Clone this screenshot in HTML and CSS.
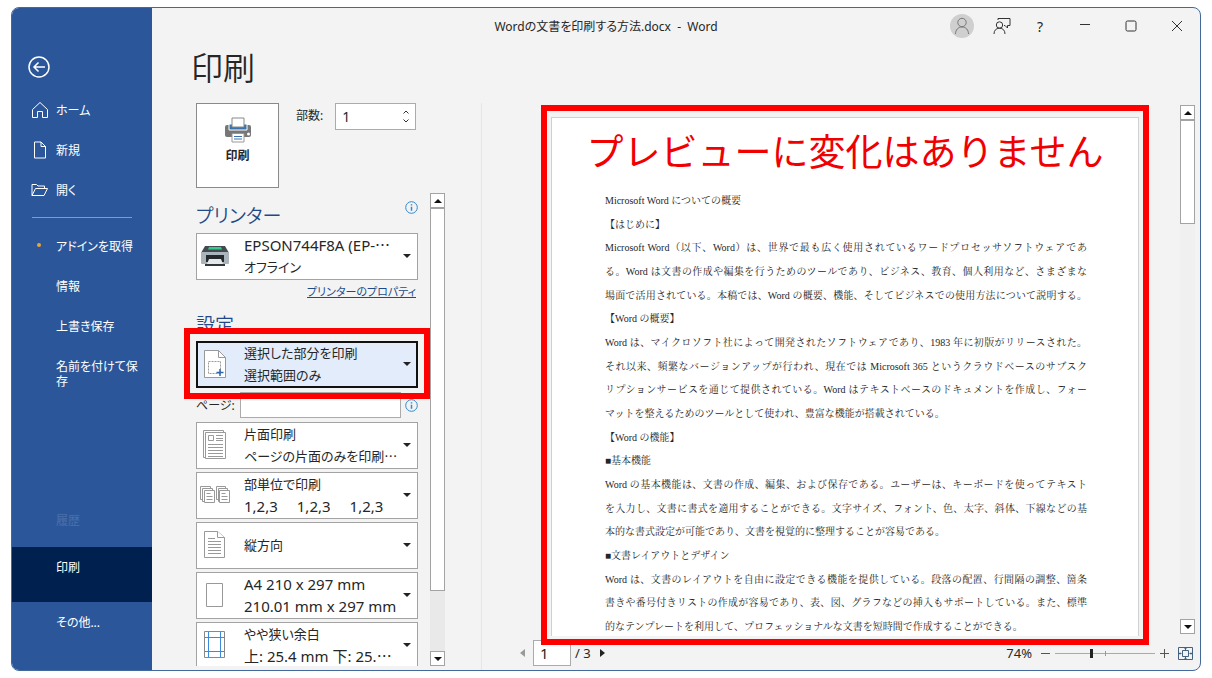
FILE: index.html
```html
<!DOCTYPE html>
<html lang="ja">
<head>
<meta charset="utf-8">
<title>Wordの文書を印刷する方法.docx - Word</title>
<link rel="stylesheet" href="styles.css">
</head>
<body>
<div class="window">
  <nav class="sidebar" aria-label="ファイル">
    <button class="back" aria-label="戻る">
      <svg width="22" height="22" viewBox="0 0 22 22"><circle cx="11" cy="11" r="10" stroke-width="1.5"/><path d="M17 11H6M10.500 6.500L6 11l4.500 4.500" stroke-width="1.500"/></svg>
    </button>
    <a class="item" href="#"><svg class="nav-icon" width="18" height="18" viewBox="0 0 18 18"><path d="M1.500 8.500L9 1.500l7.500 7V16.500h-5v-6h-5v6h-5z"/></svg>ホーム</a>
    <a class="item" href="#"><svg class="nav-icon" width="18" height="18" viewBox="0 0 18 18"><path d="M3.500 1h6.500l4.500 4.500V17h-11zM10 1v4.500h4.500"/></svg>新規</a>
    <a class="item" href="#"><svg class="nav-icon" width="18" height="18" viewBox="0 0 18 18"><path d="M1 14.500v-11h4.500L7 5h6.500v2.500M1 14.500L4.500 7.500h12L13 14.500z"/></svg>開く</a>
    <hr class="rule">
    <a class="item" href="#"><span class="dot"></span>アドインを取得</a>
    <a class="item" href="#">情報</a>
    <a class="item" href="#">上書き保存</a>
    <a class="item" href="#">名前を付けて保存</a>
    <a class="item history" aria-disabled="true">履歴</a>
    <a class="item current" href="#" aria-current="page">印刷</a>
    <a class="item more" href="#">その他...</a>
  </nav>

  <header class="titlebar">
    <div class="title">Wordの文書を印刷する方法.docx&nbsp; -&nbsp; Word</div>
    <div class="title-actions">
      <button class="avatar" aria-label="アカウント"><svg width="16" height="18" viewBox="0 0 16 18"><circle cx="8" cy="5.500" r="4.200"/><path d="M1.500 17c0-4 2.500-7 6.500-7s6.500 3 6.500 7"/></svg></button>
      <button class="plain feedback" aria-label="フィードバック"><svg width="18" height="18" viewBox="0 0 18 18"><circle cx="6.500" cy="8" r="3.200"/><path d="M1 17c0-3.500 2-5.800 5.500-5.800S12 13.500 12 17M5 3V1.500h12v7h-2.500v2.500L12 8.500h-1"/></svg></button>
      <button class="plain help" aria-label="ヘルプ">?</button>
      <button class="plain" aria-label="最小化"><svg width="12" height="12" viewBox="0 0 12 12"><path d="M1 4.500h10"/></svg></button>
      <button class="plain" aria-label="最大化"><svg width="12" height="12" viewBox="0 0 12 12"><rect x="1" y="1" width="10" height="10" rx="1.500"/></svg></button>
      <button class="plain" aria-label="閉じる"><svg width="12" height="12" viewBox="0 0 12 12"><path d="M1 1l10 10M11 1L1 11"/></svg></button>
    </div>
  </header>

  <main class="main">
    <h1>印刷</h1>
    <div class="columns">
      <section class="settings">
        <div class="print-row">
          <button class="print">
            <svg width="28" height="26" viewBox="0 0 28 26"><rect x="1" y="8" width="26" height="12" rx="2" fill="#777"/><path d="M5 7h18v6H5z" fill="#3b72ad" stroke="#fff"/><path d="M8 1h12v9H8z" fill="#fff" stroke="#888"/><path d="M8 16.500h12v8.500H8z" fill="#fff" stroke="#999"/><path d="M10 19.500h8M10 22h8" stroke="#3b72ad"/><circle cx="24.500" cy="17" r="1.500" fill="#fff"/></svg>
            <span>印刷</span>
          </button>
          <label for="copies">部数:</label>
          <div class="spin">
            <input id="copies" type="number" value="1" min="1">
            <div class="spin-buttons">
              <button aria-label="増やす"><svg width="6" height="4" viewBox="0 0 6 4"><path d="M.5 3.500L3 1l2.500 2.500"/></svg></button>
              <button aria-label="減らす"><svg width="6" height="4" viewBox="0 0 6 4"><path d="M.5 .5L3 3 5.500 .5"/></svg></button>
            </div>
          </div>
        </div>

        <div class="scroll-area">
          <div class="options">
            <div class="heading-row"><h2>プリンター</h2><button class="info" aria-label="プリンターの情報"><svg width="13" height="13" viewBox="0 0 13 13"><circle cx="6.500" cy="6.500" r="5.800"/><path d="M6.500 5.700v4M6.500 3.200v1.400" stroke-width="1.500"/></svg></button></div>
            <button class="choice" aria-haspopup="listbox">
              <svg class="choice-icon" width="32" height="32" viewBox="0 0 32 32"><path d="M6 6h20l4 7H2z" fill="#434b50"/><path d="M10 7h12l1 2.500H9z" fill="#35c98c"/><rect x="2" y="12" width="28" height="12" rx="1" fill="#aab4bb"/><path d="M7 15h18v7H7z" fill="#24292c"/><path d="M10 19h12l2 5H8z" fill="#e4e8ea"/><path d="M6 24h20v2H6z" fill="#30363a"/></svg>
              <span class="lines"><span class="latin">EPSON744F8A (EP-⋯</span><span>オフライン</span></span><span class="arrow"></span>
            </button>
            <a class="properties" href="#">プリンターのプロパティ</a>
            <h2 class="setup">設定</h2>
            <button class="choice selected" aria-haspopup="listbox">
              <svg class="choice-icon" width="32" height="32" viewBox="0 0 32 32"><path d="M5.500 2.500h14l7 7v20h-21z" fill="#fff" stroke="#999"/><path d="M19.500 2.500v7h7" fill="none" stroke="#999"/><path d="M9.500 13.500h12v12h-12z" fill="none" stroke="#999" stroke-dasharray="2 1"/><path d="M21 21v7M17.500 24.500h7" stroke="#2b67ad" stroke-width="1.500"/></svg>
              <span class="lines"><span>選択した部分を印刷</span><span>選択範囲のみ</span></span><span class="arrow"></span>
            </button>
            <div class="pages"><label for="pages">ページ:</label><input id="pages" type="text"><button class="info" aria-label="ページ指定の情報"><svg width="13" height="13" viewBox="0 0 13 13"><circle cx="6.500" cy="6.500" r="5.800"/><path d="M6.500 5.700v4M6.500 3.200v1.400" stroke-width="1.500"/></svg></button></div>
            <button class="choice" aria-haspopup="listbox">
              <svg class="choice-icon" width="32" height="32" viewBox="0 0 32 32" fill="#fff" stroke="#999"><path d="M4.500 1.500h20v27h-20z"/><path d="M6.500 3.500h20v26h-20z"/><path d="M9.500 6.500h5v5h-5zM17 6.500h7M17 9.500h7M17 11.500h7M9 15.500h15M9 18.500h15M9 21.500h15M9 24.500h15M9 27.500h15"/></svg>
              <span class="lines"><span>片面印刷</span><span>ページの片面のみを印刷⋯</span></span><span class="arrow"></span>
            </button>
            <button class="choice" aria-haspopup="listbox">
              <svg class="choice-icon" width="32" height="32" viewBox="0 0 32 32" fill="#fff" stroke="#999"><path d="M1.500 7.500h10v13h-10z"/><path d="M3.500 9.500h10v13h-10z"/><path d="M5.500 11.500h10v12h-10z"/><path d="M17.500 7.500h9v13h-9z"/><path d="M19.500 9.500h9v13h-9z"/><path d="M20.500 11.500h10v12h-10z"/><path d="M7.500 14.500h4M7.500 17.500h6M7.500 20.500h6M22.500 14.500h4M22.500 17.500h6M22.500 20.500h6"/></svg>
              <span class="lines"><span>部単位で印刷</span><span class="collate latin"><span>1,2,3</span><span>1,2,3</span><span>1,2,3</span></span></span><span class="arrow"></span>
            </button>
            <button class="choice" aria-haspopup="listbox">
              <svg class="choice-icon" width="32" height="32" viewBox="0 0 32 32" fill="#fff" stroke="#999"><path d="M5.500 2.500h13l7 6v20h-20z"/><path d="M18.500 2.500v6h7M9 9.500h7M9 12.500h13M9 15.500h13M9 18.500h13M9 21.500h13M9 24.500h13"/></svg>
              <span class="lines"><span>縦方向</span></span><span class="arrow"></span>
            </button>
            <button class="choice" aria-haspopup="listbox">
              <svg class="choice-icon" width="32" height="32" viewBox="0 0 32 32" fill="#fff" stroke="#999"><path d="M7.500 4.500h16v23h-16z"/></svg>
              <span class="lines latin"><span>A4 210 x 297 mm</span><span>210.01 mm x 297 mm</span></span><span class="arrow"></span>
            </button>
            <button class="choice" aria-haspopup="listbox">
              <svg class="choice-icon" width="32" height="32" viewBox="0 0 32 32" fill="#fff" stroke="#888"><path d="M5.500 2.500h20v26h-20z"/><path d="M9.500 3v25M21.500 3v25M6 8.500h19M6 22.500h19" stroke="#3a8add"/></svg>
              <span class="lines"><span>やや狭い余白</span><span class="latin">上: 25.4 mm 下: 25.⋯</span></span><span class="arrow"></span>
            </button>
          </div>
          <div class="scrollbar options-scroll">
            <button class="step up" aria-label="上へ"></button><div class="thumb"></div><button class="step down" aria-label="下へ"></button>
          </div>
        </div>
      </section>

      <section class="preview">
        <div class="preview-body">
          <div class="stage">
            <article class="page">
              <p class="callout">プレビューに変化はありません</p>
              <div class="text">
                <p>Microsoft Word についての概要</p>
                <p>【はじめに】</p>
                <p class="full">Microsoft Word（以下、Word）は、世界で最も広く使用されているワードプロセッサソフトウェアであ</p>
                <p class="full">る。Word は文書の作成や編集を行うためのツールであり、ビジネス、教育、個人利用など、さまざまな</p>
                <p class="full">場面で活用されている。本稿では、Word の概要、機能、そしてビジネスでの使用方法について説明する。</p>
                <p>【Word の概要】</p>
                <p class="full">Word は、マイクロソフト社によって開発されたソフトウェアであり、1983 年に初版がリリースされた。</p>
                <p class="full">それ以来、頻繁なバージョンアップが行われ、現在では Microsoft 365 というクラウドベースのサブスク</p>
                <p class="full">リプションサービスを通じて提供されている。Word はテキストベースのドキュメントを作成し、フォー</p>
                <p>マットを整えるためのツールとして使われ、豊富な機能が搭載されている。</p>
                <p>【Word の機能】</p>
                <p>■基本機能</p>
                <p class="full">Word の基本機能は、文書の作成、編集、および保存である。ユーザーは、キーボードを使ってテキスト</p>
                <p class="full">を入力し、文書に書式を適用することができる。文字サイズ、フォント、色、太字、斜体、下線などの基</p>
                <p>本的な書式設定が可能であり、文書を視覚的に整理することが容易である。</p>
                <p>■文書レイアウトとデザイン</p>
                <p class="full">Word は、文書のレイアウトを自由に設定できる機能を提供している。段落の配置、行間隔の調整、箇条</p>
                <p class="full">書きや番号付きリストの作成が容易であり、表、図、グラフなどの挿入もサポートしている。また、標準</p>
                <p>的なテンプレートを利用して、プロフェッショナルな文書を短時間で作成することができる。</p>
              </div>
            </article>
          </div>
          <div class="scrollbar">
            <button class="step up" aria-label="上へ"></button><div class="thumb short"></div><button class="step down" aria-label="下へ"></button>
          </div>
        </div>
        <footer class="status">
          <button class="turn prev" aria-label="前のページ"></button>
          <input class="page-number" type="text" value="1" aria-label="ページ番号">
          <span>/ 3</span>
          <button class="turn next" aria-label="次のページ"></button>
          <div class="zoom">
            <output for="zoom">74%</output>
            <button aria-label="縮小"><svg width="9" height="9" viewBox="0 0 9 9"><path d="M0 4.500h9"/></svg></button>
            <input id="zoom" type="range" min="0" max="100" value="36" aria-label="ズーム">
            <button aria-label="拡大"><svg width="9" height="9" viewBox="0 0 9 9"><path d="M0 4.500h9M4.500 0v9"/></svg></button>
            <button class="fit" aria-label="ページに合わせる"><svg width="15" height="13" viewBox="0 0 15 13"><path d="M.5 .5h14v12H.5z"/><path d="M4.500 3.500h6v6h-6zM7.500 1v2M7.500 10v2M1 6.500h2.500M11.500 6.500H14M6.500 2l1-1 1 1M6.500 11l1 1 1-1M2 5.500l-1 1 1 1M13 5.500l1 1-1 1"/></svg></button>
          </div>
        </footer>
      </section>
    </div>
  </main>
</div>
</body>
</html>
```
FILE: styles.css
```css
* { box-sizing: border-box; }

body {
  margin: 0;
  height: 100vh;
  padding: 7px 11px;
  background: #fff;
  color: #262626;
  font-family: "Noto Sans", "Noto Sans CJK JP", sans-serif;
  font-size: 12px;
  font-feature-settings: "palt";
}

h1, h2, p { margin: 0; font-weight: 400; }

button, input {
  margin: 0;
  padding: 0;
  border: 0;
  background: none;
  color: inherit;
  font: inherit;
  font-feature-settings: inherit;
}

svg { display: block; flex: none; }

.window {
  display: grid;
  grid-template-columns: 140px minmax(0, 1fr);
  grid-template-rows: 36px minmax(0, 1fr);
  height: 100%;
  overflow: hidden;
  border: 1px solid #42699b;
  border-radius: 8px;
  background: #f3f3f3;
}

/* sidebar */
.sidebar {
  grid-column: 1;
  grid-row: 1 / 3;
  display: flex;
  flex-direction: column;
  background: #2b579a;
  color: #fff;
}

.back {
  margin: 48px 0 12px 16px;
  width: 22px;
  height: 22px;
}

.back svg, .nav-icon { fill: none; stroke: #fff; }

.item {
  position: relative;
  flex: none;
  min-height: 40px;
  padding: 13px 8px 12px 44px;
  line-height: 15px;
  color: #fff;
  text-decoration: none;
}

.nav-icon {
  position: absolute;
  left: 19px;
  top: 11px;
}

.dot {
  position: absolute;
  left: 25px;
  top: 17px;
  width: 4px;
  height: 4px;
  border-radius: 50%;
  background: #e8a33d;
}

.rule {
  width: 100px;
  height: 1px;
  margin: 7px 20px 8px;
  border: 0;
  background: #7f9cc8;
}

.history { margin-top: auto; height: 47px; color: #4a70ac; }
.current { height: 55px; background: #00204f; }
.more { height: 68px; }

/* title bar */
.titlebar {
  grid-column: 1 / 3;
  grid-row: 1;
  z-index: 1;
  display: grid;
  grid-template-columns: 1fr auto 1fr;
  align-items: center;
}

.title { grid-column: 2; }

.title-actions {
  justify-self: end;
  display: flex;
  align-items: center;
}

.title-actions svg { fill: none; stroke: #333; }

.avatar {
  display: grid;
  place-items: center;
  width: 24px;
  height: 24px;
  margin-right: 8px;
  border-radius: 50%;
  background: #cfcfcf;
}

.title-actions .avatar svg { stroke: #777; }

.plain {
  display: grid;
  place-items: center;
  width: 46px;
  height: 32px;
}

.feedback { width: 40px; }
.help { width: 36px; margin-right: 4px; font-size: 14px; }

/* main */
.main {
  grid-column: 2;
  grid-row: 2;
  display: flex;
  flex-direction: column;
  min-height: 0;
}

h1 {
  padding: 0 0 15px 39px;
  font-family: "Noto Sans CJK JP", sans-serif;
  font-size: 32px;
  font-weight: 350;
  line-height: 44px;
}

.columns { flex: 1; display: flex; min-height: 0; }

.settings {
  width: 330px;
  display: flex;
  flex-direction: column;
  padding: 0 36px 4px 44px;
  border-right: 1px solid #e6e6e6;
}

.print-row {
  display: flex;
  align-items: flex-start;
  margin-bottom: 5px;
}

.print {
  display: flex;
  flex-direction: column;
  align-items: center;
  gap: 4px;
  width: 83px;
  height: 85px;
  padding-top: 13px;
  border: 1px solid #8a8a8a;
  background: #fff;
  font-weight: 700;
  line-height: 18px;
}

.print-row label { margin: 4px 12px 0 17px; line-height: 18px; }

.spin {
  display: flex;
  width: 81px;
  height: 27px;
  border: 1px solid #ababab;
  background: #fff;
}

.spin input {
  flex: 1;
  min-width: 0;
  padding-left: 6px;
  font-size: 14px;
  appearance: textfield;
}

.spin input::-webkit-inner-spin-button { appearance: none; }

.spin-buttons {
  display: flex;
  flex-direction: column;
  justify-content: space-evenly;
  padding-right: 6px;
}

.spin-buttons svg { fill: none; stroke: #333; }

.scroll-area {
  flex: 1;
  min-height: 0;
  display: flex;
  justify-content: space-between;
}

.options {
  width: 222px;
  display: flex;
  flex-direction: column;
  gap: 3px;
  clip-path: inset(0 -20px);
}

h2 {
  font-family: "Noto Sans CJK JP", sans-serif;
  font-size: 19px;
  font-weight: 350;
  line-height: 28px;
  color: #1f4a87;
}

.heading-row {
  display: flex;
  flex: none;
  justify-content: space-between;
  height: 37px;
  padding-top: 8px;
}

.info { width: 13px; height: 13px; }
.info svg { fill: none; stroke: #3489c9; }

.choice {
  flex: none;
  display: flex;
  align-items: center;
  height: 47px;
  padding: 0 6px 2px 2px;
  border: 1px solid #a3a3a3;
  background: #fff;
  text-align: left;
  font-size: 13px;
}

.choice-icon { margin-right: 13px; }

.lines {
  flex: 1;
  display: flex;
  flex-direction: column;
  line-height: 22px;
  white-space: nowrap;
  min-width: 0;
}

.latin { font-size: 15px; }
.collate { display: flex; gap: 19px; }

.arrow {
  border: 4px solid transparent;
  border-top-color: #222;
  border-bottom: 0;
}

.properties {
  align-self: flex-end;
  padding-right: 2px;
  font-size: 11px;
  line-height: 18px;
  color: #1f4a87;
}

.setup { flex: none; height: 34px; padding-top: 6px; }

.selected {
  position: relative;
  padding: 0 5px 1px 1px;
  border: 2px solid #111;
  background: #e3ecfa;
}

.selected::after {
  content: "";
  position: absolute;
  z-index: 1;
  inset: -15px -14px -13px;
  border: 6px solid #f00;
}

.pages {
  flex: none;
  display: flex;
  align-items: center;
  height: 28px;
}

.pages label { flex: none; width: 44px; white-space: nowrap; }

.pages input {
  flex: 1;
  min-width: 0;
  height: 26px;
  margin-right: 4px;
  border: 1px solid #ababab;
  background: #fff;
}

/* scroll bars */
.scrollbar {
  flex: none;
  width: 15px;
  display: flex;
  flex-direction: column;
  background: #e9e9e9;
}

.step {
  display: grid;
  place-items: center;
  width: 15px;
  height: 15px;
  border: 1px solid #a3a3a3;
  background: #fff;
}

.step::before { content: ""; border: 4px solid transparent; }
.up::before { border-bottom-color: #111; border-top: 0; }
.down::before { border-top-color: #111; border-bottom: 0; }
.down { margin-top: auto; }

.thumb { height: 81%; border: 1px solid #a3a3a3; background: #fff; }
.short { height: 104px; }

/* preview */
.preview {
  flex: 1;
  min-width: 0;
  display: flex;
  flex-direction: column;
  padding: 2px 5px 0 0;
}

.preview-body { flex: 1; min-height: 0; display: flex; }
.preview-body .scrollbar { margin-bottom: 2px; background: #f0f0f0; }

.stage {
  position: relative;
  flex: 1;
  min-width: 0;
  min-height: 0;
  margin: 0 31px 0 59px;
  padding: 12px 10px 0;
}

.stage::after {
  content: "";
  position: absolute;
  inset: 0 0 -9px;
  border: 6px solid #f00;
  pointer-events: none;
}

.page {
  height: 100%;
  display: flex;
  flex-direction: column;
  border: 1px solid #d0d0d0;
  border-bottom: 0;
  background: #fff;
}

.callout {
  flex: none;
  height: 73px;
  padding-top: 8px;
  text-align: center;
  white-space: nowrap;
  font-family: "Noto Sans CJK JP", sans-serif;
  font-feature-settings: normal;
  font-size: 37px;
  font-weight: 400;
  line-height: 48px;
  color: #f00000;
}

.text {
  flex: 1;
  display: flex;
  flex-direction: column;
  justify-content: space-between;
  padding: 0 51px 0 53px;
  margin-bottom: -1px;
  font-family: "Liberation Serif", "Noto Serif CJK JP", "Noto Sans CJK JP", serif;
  font-feature-settings: normal;
  font-size: 10px;
  font-weight: 300;
  line-height: 20px;
  white-space: nowrap;
}

.full { text-align: justify; text-align-last: justify; white-space: normal; }

.status {
  display: flex;
  align-items: center;
  height: 34px;
  padding: 0 2px 0 32px;
  font-size: 13px;
}

.turn { width: 16px; height: 16px; display: grid; place-items: center; }
.turn::before { content: ""; border: 4px solid transparent; }
.prev::before { border-right: 5px solid #999; border-left: 0; }
.next::before { border-left: 5px solid #222; border-right: 0; }

.page-number {
  width: 38px;
  height: 26px;
  margin: 0 4px 0 3px;
  padding-left: 6px;
  border: 1px solid #ababab;
  background: #fff;
  font-size: 15px;
}

.status .next { margin-left: 4px; }

.zoom {
  display: flex;
  align-items: center;
  gap: 5px;
  margin-left: auto;
}

.zoom output { margin-right: 4px; }
.zoom .fit { margin-left: 4px; }
.zoom svg { fill: none; stroke: #555; }
.zoom .fit svg { stroke: #44617f; }

.zoom input {
  appearance: none;
  width: 100px;
  height: 10px;
  background:
    linear-gradient(#999, #999) 50% 50% / 1px 5px no-repeat,
    linear-gradient(#aaa, #aaa) 0 50% / 100% 1px no-repeat;
}

.zoom input::-webkit-slider-thumb {
  appearance: none;
  width: 3px;
  height: 9px;
  background: #222;
}
```
